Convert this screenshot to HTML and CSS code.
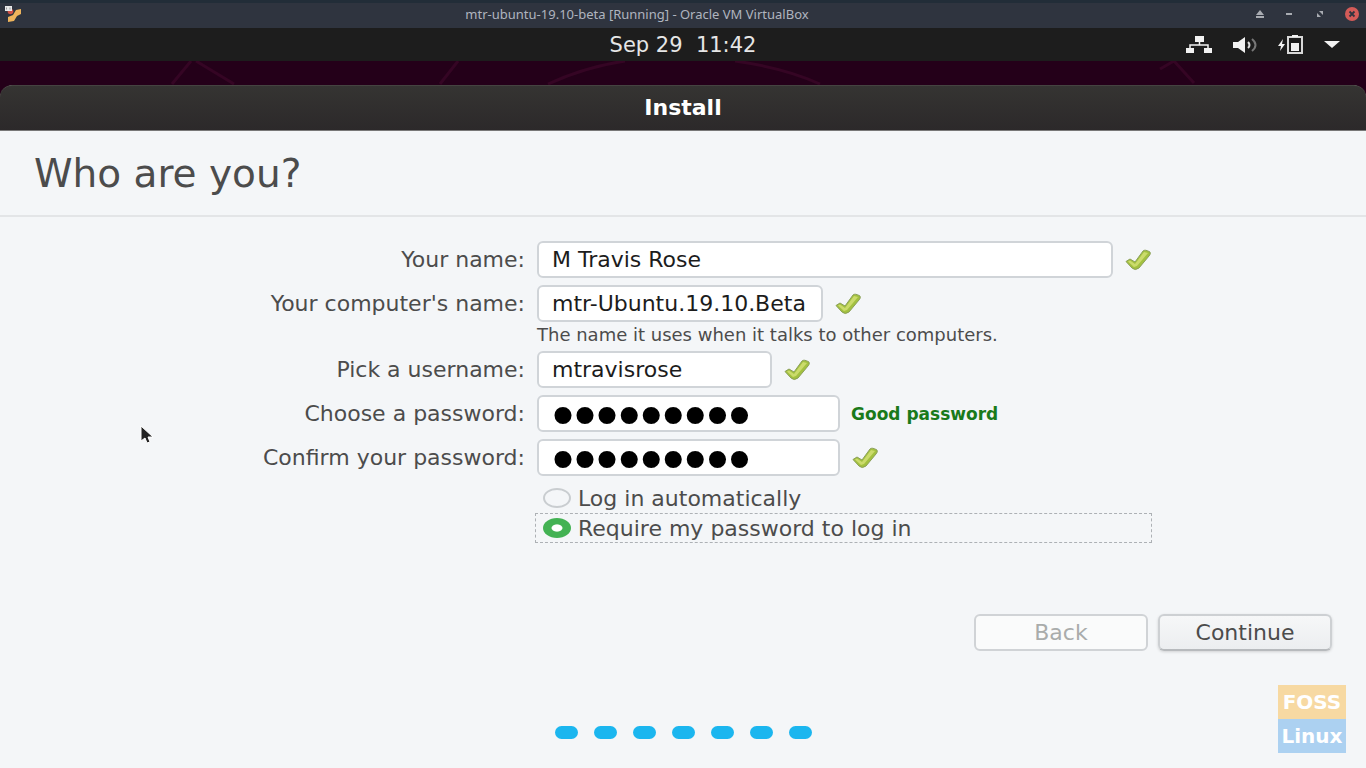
FILE: index.html
```html
<!DOCTYPE html>
<html lang="en">
<head>
    <meta charset="UTF-8">
    <meta name="viewport" content="width=device-width, initial-scale=1.0">
    <title>mtr-ubuntu-19.10-beta [Running] - Oracle VM VirtualBox</title>
    <link rel="stylesheet" href="styles.css">
</head>
<body>
    <svg class="defs" aria-hidden="true">
        <symbol id="check" viewBox="0 0 28 22">
            <path d="M2 12.500 L6 10 L11 13 L19 2 Q21 0 26 3 Q27 5 25 7 L15 19 Q11 22 8 19 Z" fill="#a3c13f" stroke="#8ba05a" stroke-width="1" stroke-linejoin="round"/>
            <path d="M4 12.500 L6 11.500 L11 15 L20 3 L24 4 L13 17 L10 18 Z" fill="#cbdb6c"/>
        </symbol>
    </svg>

    <header class="titlebar">
        <svg class="app-icon" width="16" height="16" viewBox="0 0 16 16">
            <path d="M3 16 V11 L8 9 L11 4 L16 3 V8 L12 10 L9 15 Z" fill="#eeb45c"/>
            <circle cx="5.500" cy="5.500" r="2.800" fill="#cf4f45"/>
            <rect width="7" height="5" fill="#e8e8e8"/>
            <path d="M1.500 1.500 V3.500 M5 1.500 V3.500" stroke="#999" fill="none"/>
        </svg>
        <div class="titlebar-text">mtr-ubuntu-19.10-beta [Running] - Oracle VM VirtualBox</div>
        <div class="window-buttons">
            <button type="button" aria-label="Shade"><svg width="14" height="14" viewBox="0 0 14 14"><path d="M7 3 L11 8 H3 Z M3 9 H11 V11 H3 Z" fill="#a9acb2"/></svg></button>
            <button type="button" aria-label="Minimize"><svg width="14" height="14" viewBox="0 0 14 14"><path d="M3 6 H9 V8 H3 Z" fill="#a9acb2"/></svg></button>
            <button type="button" aria-label="Restore"><svg width="14" height="14" viewBox="0 0 14 14"><path d="M6 4 H10 V8 Z M4 6 V10 H8 Z" fill="#a9acb2"/></svg></button>
            <button type="button" aria-label="Close"><svg width="14" height="14" viewBox="0 0 14 14"><circle cx="7" cy="7" r="7" fill="#d45b58"/><path d="M4.500 4.500 L9.500 9.500 M9.500 4.500 L4.500 9.500" stroke="#2f343f" stroke-width="1.800"/></svg></button>
        </div>
    </header>

    <div class="panel">
        <div class="clock">Sep 29&nbsp; 11:42</div>
        <div class="tray">
            <svg width="26" height="18" viewBox="0 0 26 18"><path d="M9 0 H18 V6 H9 Z M0 12 H8 V17 H0 Z M18 12 H26 V17 H18 Z" fill="#f2f2f2"/><path d="M13.500 6 V9 M4 12 V9 H22 V12" fill="none" stroke="#f2f2f2" stroke-width="1.500"/></svg>
            <svg width="26" height="18" viewBox="0 0 26 18"><path d="M1 6 H6 L13 1 V17 L6 12 H1 Z" fill="#f2f2f2"/><path d="M16 6 Q19 9 16 12" fill="none" stroke="#dedede" stroke-width="2"/><path d="M20 3 Q27 9 20 15" fill="none" stroke="#777" stroke-width="2"/></svg>
            <svg width="26" height="19" viewBox="0 0 26 19"><path d="M5 4 L0 11 H3 L2 16 L7 9 H4 Z" fill="#f2f2f2"/><path d="M10 2 H24 V18 H10 Z" fill="none" stroke="#d8d8d8" stroke-width="2"/><path d="M14 0 H20 V2 H14 Z M13 8 H21 V16 H13 Z" fill="#f2f2f2"/></svg>
            <svg width="16" height="7" viewBox="0 0 16 7"><path d="M0 0 H16 L8 7 Z" fill="#f2f2f2"/></svg>
        </div>
    </div>

    <div class="wallpaper">
        <svg width="100%" height="24" viewBox="0 0 1366 24" preserveAspectRatio="none">
            <path d="M172 23 L191 0 M196 0 L234 23 M440 23 L458 0 M548 23 Q585 6 625 0 M735 0 Q785 7 820 23 M1160 8 L1174 0 L1194 22" fill="none" stroke="#350524" stroke-width="3"/>
        </svg>
    </div>

    <main class="installer">
        <div class="installer-title">Install</div>
        <h1>Who are you?</h1>

        <form id="userForm">
            <div class="fields">
                <label for="name">Your name:</label>
                <div class="field">
                    <input class="wide" id="name" type="text" value="M Travis Rose">
                    <svg class="check"><use href="#check"/></svg>
                </div>

                <label for="computer">Your computer's name:</label>
                <div class="field">
                    <input class="medium" id="computer" type="text" value="mtr-Ubuntu.19.10.Beta">
                    <svg class="check"><use href="#check"/></svg>
                </div>
                <div class="hint">The name it uses when it talks to other computers.</div>

                <label for="username">Pick a username:</label>
                <div class="field">
                    <input class="short" id="username" type="text" value="mtravisrose">
                    <svg class="check"><use href="#check"/></svg>
                </div>

                <label for="password">Choose a password:</label>
                <div class="field">
                    <input class="secret" id="password" type="password" value="ubuntu123">
                    <span class="strength">Good password</span>
                </div>

                <label for="confirm">Confirm your password:</label>
                <div class="field">
                    <input class="secret" id="confirm" type="password" value="ubuntu123">
                    <svg class="check"><use href="#check"/></svg>
                </div>

                <div class="options">
                    <label class="option"><input type="radio" name="login">Log in automatically</label>
                    <label class="option focused"><input type="radio" name="login" checked>Require my password to log in</label>
                </div>
            </div>

            <div class="actions">
                <button class="button" type="button" disabled>Back</button>
                <button class="button" type="submit">Continue</button>
            </div>
        </form>

        <div class="steps">
            <span></span><span></span><span></span><span></span><span></span><span></span><span></span>
        </div>
    </main>

    <div class="badge">
        <div class="badge-top">FOSS</div>
        <div class="badge-bottom">Linux</div>
    </div>

    <svg class="pointer" width="14" height="20" viewBox="0 0 14 20"><path d="M1 1 V16 L5 13 L7 18 L10 17 L8 12 H13 Z" fill="#222" stroke="#fff" stroke-width="1"/></svg>

    <script>
        // keep the end of a long computer name in view
        const computer = document.getElementById('computer');
        computer.scrollLeft = computer.scrollWidth;

        document.getElementById('userForm').addEventListener('submit', function(event) {
            event.preventDefault();
        });
    </script>
</body>
</html>
```
FILE: styles.css
```css
* {
    box-sizing: border-box;
}
body {
    margin: 0;
    min-height: 100vh;
    display: flex;
    flex-direction: column;
    position: relative;
    background-color: #240019;
    color: #4c4c4c;
    font-family: "DejaVu Sans", sans-serif;
    font-size: 22px;
}
.defs {
    position: absolute;
    width: 0;
    height: 0;
}

/* host window title bar */
.titlebar {
    display: flex;
    align-items: center;
    height: 28px;
    padding: 0 7px 0 5px;
    background-color: #2f343f;
    box-shadow: inset 0 3px #222d38;
    color: #afb4bf;
    font-family: "Noto Sans", sans-serif;
    font-size: 13px;
}
.titlebar-text {
    flex: 1;
    text-align: center;
}
.window-buttons {
    display: flex;
    gap: 16px;
}
.window-buttons button {
    display: flex;
    padding: 0;
    border: none;
    background: none;
}
.window-buttons button:last-child {
    margin-left: 2px;
}

/* guest top panel */
.panel {
    display: grid;
    grid-template-columns: 1fr auto 1fr;
    align-items: center;
    height: 33px;
    padding: 0 26px;
    background-color: #1d1d1d;
    color: #e6e6e6;
    font-size: 21px;
    line-height: 32px;
}
.clock {
    grid-column: 2;
}
.tray {
    display: flex;
    justify-content: flex-end;
    align-items: center;
    gap: 20px;
}
.wallpaper {
    height: 24px;
}
.wallpaper svg {
    display: block;
}

/* installer window */
.installer {
    flex: 1;
    background-color: #f4f6f8;
    border-radius: 14px 14px 0 0;
}
.installer-title {
    height: 46px;
    border-top: 1px solid #454441;
    border-bottom: 1px solid #787878;
    border-radius: 12px 12px 0 0;
    background: linear-gradient(#353432, #2c292a);
    color: #fff;
    font-size: 22px;
    font-weight: bold;
    line-height: 44px;
    text-align: center;
}
h1 {
    margin: 0;
    padding: 1px 34px 0;
    border-bottom: 2px solid #e3e5e7;
    font-size: 39px;
    font-weight: normal;
    line-height: 83px;
}
.fields {
    display: grid;
    grid-template-columns: 4fr 5fr;
    column-gap: 12px;
    row-gap: 7px;
    align-items: center;
    padding: 24px 214px 0 33px;
}
.fields > label {
    text-align: right;
}
.field {
    display: flex;
    align-items: center;
    gap: 11px;
}
.field input {
    height: 37px;
    padding: 0 13px;
    border: 2px solid #d0d4d8;
    border-radius: 6px;
    background-color: #fff;
    color: #1c1c1c;
    font-family: inherit;
    font-size: 22px;
    outline: none;
}
.field .wide {
    flex: 1;
    min-width: 0;
}
.field .medium {
    width: 286px;
}
.field .short {
    width: 235px;
}
.field .secret {
    width: 303px;
    color: #000;
    font-family: "Liberation Sans", sans-serif;
    font-size: 63px;
    line-height: 33px;
}
.check {
    width: 28px;
    height: 22px;
}
.hint {
    grid-column: 2;
    margin: -5px 0 -1px;
    font-size: 18px;
    line-height: 21px;
}
.strength {
    color: #1a7a1a;
    font-size: 17px;
    font-weight: bold;
}
.options {
    grid-column: 2;
    margin-left: -2px;
}
.option {
    display: flex;
    align-items: center;
    gap: 7px;
    height: 30px;
    padding-left: 7px;
    border: 1px dashed transparent;
}
.option.focused {
    border-color: #adb1b5;
}
.option input {
    appearance: none;
    width: 28px;
    height: 20px;
    margin: 0;
    border: 2px solid #c9cdd0;
    border-radius: 50%;
}
.option input:checked {
    border: none;
    background: radial-gradient(6px 4px, #fff 80%, #43b253 100%);
}

.actions {
    display: flex;
    justify-content: flex-end;
    gap: 10px;
    padding: 71px 34px 0;
}
.button {
    width: 174px;
    height: 37px;
    border: 2px solid #cdd0d3;
    border-bottom-color: #b7babd;
    border-radius: 6px;
    background: linear-gradient(#f6f7f8, #eceef0);
    box-shadow: 0 1px 3px rgba(0, 0, 0, 0.15);
    color: #4c4c4c;
    font-family: inherit;
    font-size: 22px;
    line-height: 31px;
}
.button:disabled {
    border-color: #d0d3d6;
    background: #fafbfb;
    box-shadow: none;
    color: #a9acab;
}
.steps {
    display: flex;
    justify-content: center;
    gap: 16px;
    padding: 75px 0 29px;
}
.steps span {
    width: 23px;
    height: 13px;
    border-radius: 7px;
    background-color: #1bb6ef;
}

/* overlays */
.badge {
    position: absolute;
    right: 20px;
    bottom: 15px;
    width: 68px;
    color: #fff;
    font-size: 20px;
    font-weight: bold;
    line-height: 34px;
    text-align: center;
}
.badge-top {
    background-color: #f7d9a2;
}
.badge-bottom {
    background-color: #acd1f1;
}
.pointer {
    position: absolute;
    left: 140px;
    top: 425px;
}
```
